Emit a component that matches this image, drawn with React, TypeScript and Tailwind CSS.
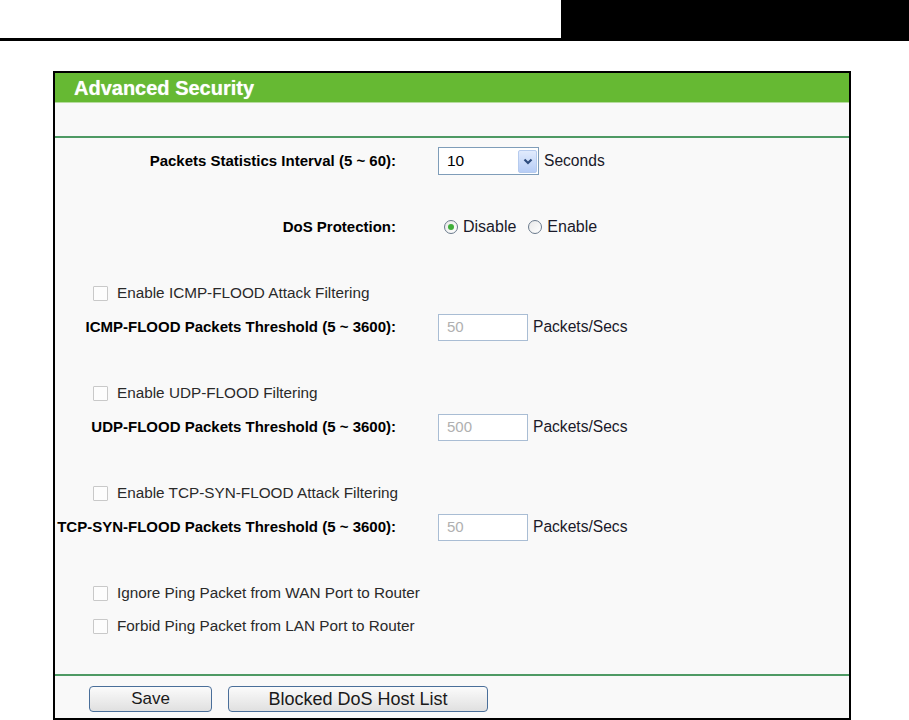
import React from "react";

const Check = ({ label }: { label: string }) => (
  <div className="flex items-center h-full pl-[38px]">
    <span className="w-[15px] h-[15px] border border-[#c9c9c9] bg-[#fdfdfd] rounded-[1px]" />
    <span className="ml-[9px] text-[15.3px] text-[#2a2a2a]">{label}</span>
  </div>
);

const Label = ({ children }: { children: React.ReactNode }) => (
  <div className="w-[341px] shrink-0 text-right font-bold text-[15px] text-black whitespace-nowrap">{children}</div>
);

const Threshold = ({ label, value }: { label: string; value: string }) => (
  <div className="flex items-center h-[34px]">
    <Label>{label}</Label>
    <div className="ml-[42px] w-[90px] h-[27px] border border-[#a9bdd4] bg-white flex items-center pl-[8px] text-[15px] text-[#b0b0b0]">
      {value}
    </div>
    <span className="ml-[5px] text-[15.6px] text-[#1a1a2a]">Packets/Secs</span>
  </div>
);

const Radio = ({ checked, label }: { checked?: boolean; label: string }) => (
  <div className="flex items-center">
    <span className="w-[14px] h-[14px] rounded-full border border-[#6a7a8c] bg-gradient-to-br from-[#e9e9e9] to-white flex items-center justify-center">
      {checked && <span className="w-[6px] h-[6px] rounded-full bg-[#3fae3a]" />}
    </span>
    <span className="ml-[5px] text-[16px] text-[#1a1a2a]">{label}</span>
  </div>
);

export default function App() {
  return (
    <div className="w-[909px] h-[720px] bg-white overflow-hidden font-['Liberation_Sans',Arial,sans-serif]">
      <div className="flex h-[41px]">
        <div className="w-[561px] border-b-[3px] border-black" />
        <div className="flex-1 bg-black" />
      </div>
      <div className="mt-[30px] ml-[53px] w-[798px] h-[649px] border-2 border-black flex flex-col bg-[#f9f9f9]">
        <div className="h-[29px] bg-[#66b933] flex items-center pl-[19px] shrink-0">
          <span className="text-white font-bold text-[20px] [text-shadow:0_0_1px_rgba(255,255,255,0.6)]">Advanced Security</span>
        </div>
        <div className="h-[34px] shrink-0 border-t border-[#b7dca0]" />
        <div className="h-[2px] bg-[#4e9a64] shrink-0" />
        <div className="h-[6px] shrink-0" />
        <div className="flex items-center h-[34px]">
          <Label>Packets Statistics Interval (5 ~ 60):</Label>
          <div className="ml-[42px] w-[101px] h-[28px] border border-[#7f9db9] bg-white flex items-center justify-between pl-[8px] pr-[1px]">
            <span className="text-[15.5px] text-black">10</span>
            <span className="w-[19px] h-[23px] rounded-[2px] border border-[#b6cbee] bg-gradient-to-b from-[#e1ebfd] to-[#b7cdf6] flex items-center justify-center">
              <svg width="10" height="7" viewBox="0 0 10 7">
                <path d="M1.5 1.5 L5 5 L8.5 1.5" stroke="#2e4c7e" strokeWidth="2.2" fill="none" />
              </svg>
            </span>
          </div>
          <span className="ml-[5px] text-[15.6px] text-[#1a1a2a]">Seconds</span>
        </div>
        <div className="h-[32px]" />
        <div className="flex items-center h-[34px]">
          <Label>DoS Protection:</Label>
          <div className="ml-[48px] flex items-center gap-[12px]">
            <Radio checked label="Disable" />
            <Radio label="Enable" />
          </div>
        </div>
        <div className="h-[32px]" />
        <div className="h-[34px]"><Check label="Enable ICMP-FLOOD Attack Filtering" /></div>
        <Threshold label="ICMP-FLOOD Packets Threshold (5 ~ 3600):" value="50" />
        <div className="h-[32px]" />
        <div className="h-[34px]"><Check label="Enable UDP-FLOOD Filtering" /></div>
        <Threshold label="UDP-FLOOD Packets Threshold (5 ~ 3600):" value="500" />
        <div className="h-[32px]" />
        <div className="h-[34px]"><Check label="Enable TCP-SYN-FLOOD Attack Filtering" /></div>
        <Threshold label="TCP-SYN-FLOOD Packets Threshold (5 ~ 3600):" value="50" />
        <div className="h-[32px]" />
        <div className="h-[34px]"><Check label="Ignore Ping Packet from WAN Port to Router" /></div>
        <div className="h-[33px]"><Check label="Forbid Ping Packet from LAN Port to Router" /></div>
        <div className="flex-1" />
        <div className="h-[2px] bg-[#4e9a64] shrink-0" />
        <div className="h-[42px] shrink-0 flex items-center pt-[3px] pl-[34px] gap-[16px]">
          <button className="w-[123px] h-[26px] rounded-[4px] border border-[#4a6f9a] bg-gradient-to-b from-[#fbfbfb] to-[#e0e0e0] text-[17px] text-[#1a1a1a] leading-none">
            Save
          </button>
          <button className="w-[260px] h-[26px] rounded-[4px] border border-[#4a6f9a] bg-gradient-to-b from-[#fbfbfb] to-[#e0e0e0] text-[18px] text-[#1a1a1a] leading-none">
            Blocked DoS Host List
          </button>
        </div>
      </div>
    </div>
  );
}
